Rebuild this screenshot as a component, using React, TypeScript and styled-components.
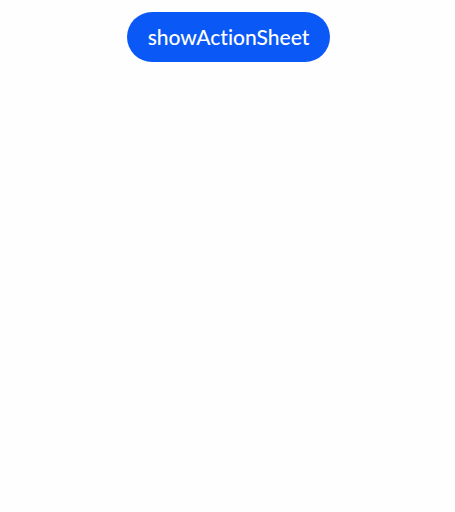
import { useState } from "react";
import { createGlobalStyle, styled } from "styled-components";

export default function App() {
  const [opened, setOpened] = useState(false);

  return (
    <>
      <GlobalStyle />
      <MainContainer>
        <SheetButton
          type="button"
          aria-pressed={opened}
          onClick={() => setOpened(!opened)}
        >
          showActionSheet
        </SheetButton>
      </MainContainer>
    </>
  );
}

const GlobalStyle = createGlobalStyle`
  body {
    margin: 0;
    background-color: #fefefe;
    font-family: Lato, "Open Sans", sans-serif;
  }
`;

const MainContainer = styled.main`
  display: flex;
  flex-direction: column;
  align-items: center;
  padding: 12px 0 12px 2px;
`;

const SheetButton = styled.button`
  height: 50px;
  padding: 0 21px;
  border: none;
  border-radius: 25px;
  background-color: #0a59f7;
  color: #ffffff;
  font-family: inherit;
  font-size: 21px;
  font-weight: 500;
  font-variant-ligatures: none;
  line-height: 28px;
  cursor: pointer;

  &:active {
    background-color: #0950de;
  }
`;
